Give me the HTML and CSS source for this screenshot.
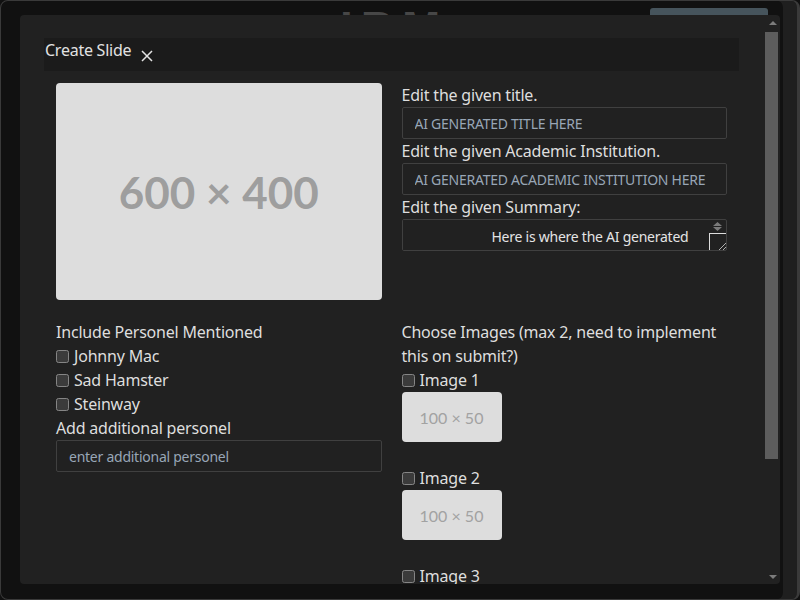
FILE: index.html
```html
<!DOCTYPE html>
<html lang="en">
<head>
<meta charset="utf-8">
<title>Create Slide</title>
<link rel="stylesheet" href="styles.css">
</head>
<body>
<div class="frame">
  <div class="page-header">
    <span class="brand">IBM</span>
    <span class="page-btn"></span>
  </div>
  <div class="modal">
    <div class="modal-scroll">
      <div class="modal-inner">
        <div class="modal-header">
          <h5 class="modal-title">Create Slide</h5>
          <button class="close-btn" type="button" aria-label="Close">
            <svg width="12" height="12" viewBox="0 0 12 12"><path d="M1 1 L11 11 M11 1 L1 11" stroke="#e4e4e4" stroke-width="1.5" fill="none"/></svg>
          </button>
        </div>
        <div class="grid">
          <div class="ph ph-large">600 × 400</div>
          <div class="fields">
            <label class="lbl">Edit the given title.</label>
            <input class="field" type="text" placeholder="AI GENERATED TITLE HERE">
            <label class="lbl">Edit the given Academic Institution.</label>
            <input class="field" type="text" placeholder="AI GENERATED ACADEMIC INSTITUTION HERE">
            <label class="lbl">Edit the given Summary:</label>
            <div class="summary-box">
              <textarea class="summary" rows="1">Here is where the AI generated summary of the paper will be shown so that it can be edited before the slide is created.</textarea>
              <div class="ta-scroll">
                <div class="ta-arrows">
                  <svg width="9" height="4" viewBox="0 0 9 4"><path d="M0 4 L4.5 0 L9 4 Z" fill="#7a7a7a"/></svg>
                  <svg width="9" height="4" viewBox="0 0 9 4"><path d="M0 0 L9 0 L4.5 4 Z" fill="#7a7a7a"/></svg>
                </div>
                <div class="ta-resizer">
                  <svg width="9" height="9" viewBox="0 0 9 9"><path d="M2 9 L9 2 M6 9 L9 6" stroke="#b0b0b0" stroke-width="1" fill="none"/></svg>
                </div>
              </div>
            </div>
          </div>
          <div class="people">
            <div class="lbl">Include Personel Mentioned</div>
            <label class="check"><input type="checkbox">Johnny Mac</label>
            <label class="check"><input type="checkbox">Sad Hamster</label>
            <label class="check"><input type="checkbox">Steinway</label>
            <label class="lbl">Add additional personel</label>
            <input class="field" type="text" placeholder="enter additional personel">
          </div>
          <div class="images">
            <div class="lbl">Choose Images (max 2, need to implement this on submit?)</div>
            <label class="check"><input type="checkbox">Image 1</label>
            <div class="ph ph-small">100 × 50</div>
            <label class="check"><input type="checkbox">Image 2</label>
            <div class="ph ph-small">100 × 50</div>
            <label class="check"><input type="checkbox">Image 3</label>
            <div class="ph ph-small">100 × 50</div>
          </div>
        </div>
      </div>
    </div>
    <div class="vscroll">
      <div class="vs-arrow">
        <svg width="8" height="4" viewBox="0 0 8 4"><path d="M0 4 L4 0 L8 4 Z" fill="#7c7c7c"/></svg>
      </div>
      <div class="vs-track"><div class="vs-thumb"></div></div>
      <div class="vs-arrow">
        <svg width="8" height="4" viewBox="0 0 8 4"><path d="M0 0 L8 0 L4 4 Z" fill="#7c7c7c"/></svg>
      </div>
    </div>
  </div>
</div>
</body>
</html>
```
FILE: styles.css
```css
html, body {
  margin: 0;
  padding: 0;
  background: #111111;
  color-scheme: dark;
}
body {
  width: 800px;
  height: 600px;
  overflow: hidden;
  font-family: "Noto Sans", "Open Sans", sans-serif;
}
.frame {
  position: relative;
  width: 800px;
  height: 600px;
  box-sizing: border-box;
  border: 1px solid #3a3a3a;
  border-right-width: 3px;
  border-radius: 8px;
  background: #111111;
  overflow: hidden;
  box-shadow: inset -14px 0 0 #1f1f1f;
}
.page-header {
  display: flex;
  align-items: flex-start;
  padding: 7px 29px 0 339px;
}
.brand {
  font-family: "Liberation Sans", sans-serif;
  font-weight: 700;
  font-size: 46px;
  line-height: 32px;
  color: #474747;
  letter-spacing: 8px;
  margin-top: 4px;
}
.page-btn {
  margin-left: auto;
  width: 118px;
  height: 36px;
  background: #46545c;
  border-radius: 3px;
}
.modal {
  position: absolute;
  left: 19px;
  top: 14px;
  width: 760px;
  height: 569px;
  display: flex;
  background: #212121;
  border-radius: 4px;
  overflow: hidden;
  color: #dcdcdc;
  letter-spacing: -0.2px;
}
.modal-scroll {
  flex: 1;
  min-width: 0;
  overflow: hidden;
}
.modal-inner {
  padding: 23px 26px 71px 24px;
}
.modal-header {
  display: flex;
  align-items: flex-start;
  height: 33px;
  background: #1b1b1b;
}
.modal-title {
  margin: 0;
  padding-left: 1px;
  font-size: 16px;
  font-weight: 400;
  line-height: 24px;
  color: #e2e2e2;
  letter-spacing: -0.25px;
}
.close-btn {
  margin-left: 9px;
  width: 14px;
  height: 33px;
  padding: 2px 0 0;
  border: 0;
  background: none;
  display: flex;
  align-items: center;
  justify-content: center;
}
.grid {
  margin-top: 12px;
  padding: 0 12px;
  display: grid;
  grid-template-columns: 1fr 1fr;
  column-gap: 20px;
  row-gap: 20px;
  align-items: start;
}
.ph {
  background: #dddddd;
  border-radius: 4px;
  display: flex;
  align-items: center;
  justify-content: center;
  font-family: Lato, sans-serif;
  color: #9e9e9e;
  letter-spacing: 0;
}
.ph-large {
  aspect-ratio: 3 / 2;
  font-size: 44px;
  font-weight: 700;
}
.ph-small {
  width: 100px;
  height: 50px;
  font-size: 16px;
  font-weight: 400;
  color: #a2a2a2;
  margin-bottom: 24px;
}
.lbl {
  display: block;
  font-size: 16px;
  line-height: 24px;
  color: #dedede;
}
.field {
  display: block;
  width: 100%;
  box-sizing: border-box;
  height: 32px;
  margin: 0;
  padding: 0 12px;
  border: 1px solid #404040;
  border-radius: 2px;
  background: #212121;
  color: #dcdcdc;
  font-family: "Noto Sans", "Open Sans", sans-serif;
  font-size: 14px;
  letter-spacing: -0.25px;
}
.field::placeholder {
  color: #98a6b6;
  opacity: 1;
}
.summary-box {
  display: flex;
  height: 32px;
  box-sizing: border-box;
  border: 1px solid #404040;
  border-radius: 2px;
  overflow: hidden;
}
.summary {
  flex: 1;
  min-width: 0;
  height: 100%;
  box-sizing: border-box;
  margin: 0;
  padding: 6px 12px 0;
  border: 0;
  background: #212121;
  color: #e4e4e4;
  font-family: "Noto Sans", "Open Sans", sans-serif;
  font-size: 14px;
  line-height: 21px;
  letter-spacing: -0.25px;
  text-indent: 77px;
  resize: none;
  overflow: hidden;
}
.ta-scroll {
  width: 17px;
  display: flex;
  flex-direction: column;
}
.ta-arrows {
  flex: 1;
  display: flex;
  flex-direction: column;
  align-items: center;
  justify-content: center;
  gap: 1px;
}
.ta-resizer {
  height: 17px;
  box-sizing: border-box;
  border-top: 1px solid #dcdcdc;
  border-left: 1px solid #dcdcdc;
  display: flex;
  align-items: flex-end;
  justify-content: flex-end;
}
.check {
  display: flex;
  align-items: center;
  gap: 5px;
  height: 24px;
  font-size: 16px;
  color: #dedede;
}
.check input {
  margin: 0;
  width: 13px;
  height: 13px;
}
.vscroll {
  width: 15px;
  display: flex;
  flex-direction: column;
}
.vs-arrow {
  height: 15px;
  display: flex;
  align-items: center;
  justify-content: center;
}
.vs-track {
  flex: 1;
  padding-top: 2px;
}
.vs-thumb {
  width: 13px;
  height: 427px;
  background: #5d5d5d;
}
```
